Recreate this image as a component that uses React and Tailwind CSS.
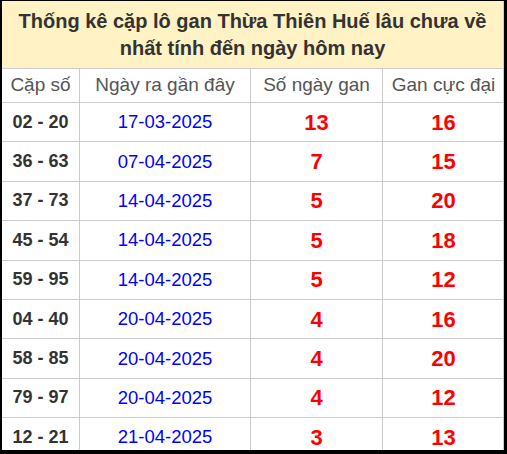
export default function App() {
  const rows = [
    ["02 - 20", "17-03-2025", "13", "16"],
    ["36 - 63", "07-04-2025", "7", "15"],
    ["37 - 73", "14-04-2025", "5", "20"],
    ["45 - 54", "14-04-2025", "5", "18"],
    ["59 - 95", "14-04-2025", "5", "12"],
    ["04 - 40", "20-04-2025", "4", "16"],
    ["58 - 85", "20-04-2025", "4", "20"],
    ["79 - 97", "20-04-2025", "4", "12"],
    ["12 - 21", "21-04-2025", "3", "13"],
  ];
  return (
    <div className="w-[507px] h-[454px] bg-black pt-[1px] pl-[2px] pr-[3px] pb-[4px] overflow-hidden" style={{ fontFamily: '"Liberation Sans", Arial, sans-serif' }}>
      <div className="w-[502px] h-[449px] bg-white overflow-hidden border-r border-[#ccc]">
        <div className="h-[68px] bg-[#fff2c4] flex flex-col items-center justify-center text-[20px] leading-[27px] font-bold text-[#333] text-center border-b border-[#ccc]">
          <div>Thống kê cặp lô gan Thừa Thiên Huế lâu chưa về</div>
          <div>nhất tính đến ngày hôm nay</div>
        </div>
        <div className="grid grid-cols-[78px_171px_132px_121px] h-[34px] border-b border-[#ccc] text-[19px] text-[#555]">
          <div className="flex items-center justify-center border-r border-[#ccc]">Cặp số</div>
          <div className="flex items-center justify-center border-r border-[#ccc]">Ngày ra gần đây</div>
          <div className="flex items-center justify-center border-r border-[#ccc]">Số ngày gan</div>
          <div className="flex items-center justify-center">Gan cực đại</div>
        </div>
        {rows.map((r, i) => (
          <div key={i} className="grid grid-cols-[78px_171px_132px_121px] h-[39.4px] border-b border-[#ccc]">
            <div className="flex items-center justify-center border-r border-[#ccc] font-bold text-[18px] text-[#333]">{r[0]}</div>
            <div className="flex items-center justify-center border-r border-[#ccc] text-[18.5px] text-[#0000ff]">{r[1]}</div>
            <div className="flex items-center justify-center border-r border-[#ccc] font-bold text-[22px] text-[#ff0000]">{r[2]}</div>
            <div className="flex items-center justify-center font-bold text-[22px] text-[#ff0000]">{r[3]}</div>
          </div>
        ))}
      </div>
    </div>
  );
}
